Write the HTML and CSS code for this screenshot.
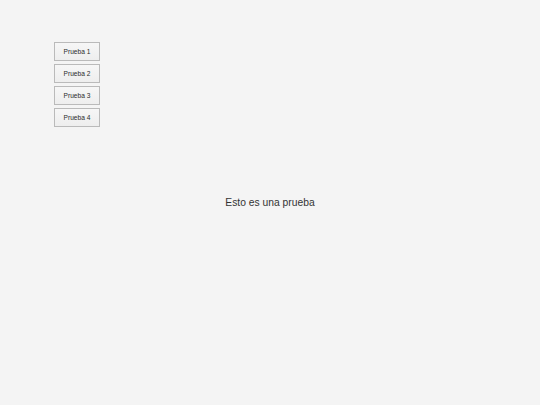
FILE: index.html
```html
<!DOCTYPE html>
<html lang="es">
<head>
<meta charset="utf-8">
<title>Prueba</title>
<link rel="stylesheet" href="styles.css">
</head>
<body>
<main class="stage">
  <div class="menu">
    <button class="btn">Prueba 1</button>
    <button class="btn">Prueba 2</button>
    <button class="btn">Prueba 3</button>
    <button class="btn">Prueba 4</button>
  </div>
  <p class="message">Esto es una prueba</p>
</main>
</body>
</html>
```
FILE: styles.css
```css
html, body {
  margin: 0;
  padding: 0;
  background: #f4f4f4;
}
.stage {
  display: grid;
  width: 540px;
  height: 405px;
  font-family: "Liberation Sans", Arial, sans-serif;
}
.menu {
  grid-area: 1 / 1;
  display: flex;
  flex-direction: column;
  align-items: flex-start;
  gap: 3px;
  padding: 42px 0 0 54px;
}
.btn {
  box-sizing: border-box;
  width: 46px;
  height: 19px;
  margin: 0;
  padding: 0;
  border: 1px solid #bababa;
  border-radius: 0;
  background: linear-gradient(#f6f6f6, #eeeeee);
  color: #2a2a2a;
  font-family: "Liberation Sans", Arial, sans-serif;
  font-size: 6.6px;
  line-height: 17px;
}
.message {
  grid-area: 1 / 1;
  place-self: center;
  margin: 0;
  color: #333;
  font-size: 10.3px;
}
```
